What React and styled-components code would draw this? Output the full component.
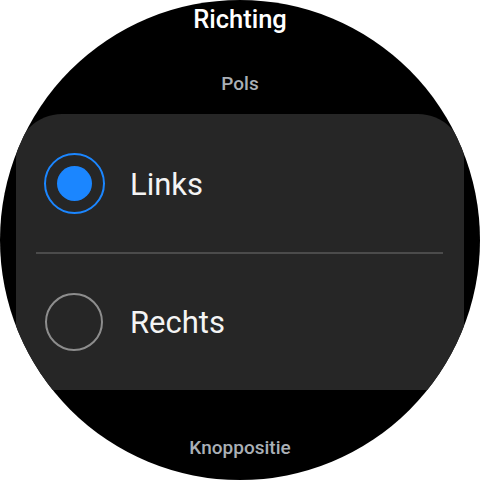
import React from "react";
import styled, { createGlobalStyle } from "styled-components";

const Global = createGlobalStyle`
  html, body { margin: 0; padding: 0; background: #ffffff; }
  body { font-family: Roboto, "Noto Sans", "Liberation Sans", sans-serif; }
  #root { width: 480px; height: 480px; }
`;

const Watch = styled.div`
  width: 480px;
  height: 480px;
  border-radius: 50%;
  overflow: hidden;
  background: #000;
  display: flex;
  flex-direction: column;
  align-items: center;
`;

const Title = styled.div`
  margin-top: 7px;
  font-size: 25.5px;
  line-height: 25px;
  font-weight: 500;
  color: #ffffff;
`;

const Caption = styled.div`
  margin-top: ${(p) => p.$top}px;
  font-size: 19px;
  line-height: 19px;
  font-weight: 500;
  color: #aab0b6;
`;

const Card = styled.div`
  margin-top: 21px;
  width: 448px;
  background: #262626;
  border-radius: 46px 46px 0 0;
  display: flex;
  flex-direction: column;
`;

const Row = styled.div`
  height: ${(p) => p.$h}px;
  display: flex;
  align-items: center;
  padding-left: 27px;
  gap: 25px;
`;

const Divider = styled.div`
  height: 1.5px;
  margin: 0 21px 0 20px;
  background: #4b4b4b;
`;

const RadioSlot = styled.div`
  width: 62px;
  height: 62px;
  display: flex;
  align-items: center;
  justify-content: center;
  flex-shrink: 0;
`;

const Radio = styled.div`
  box-sizing: border-box;
  width: ${(p) => (p.$checked ? 61 : 58)}px;
  height: ${(p) => (p.$checked ? 61 : 58)}px;
  border-radius: 50%;
  border: ${(p) => (p.$checked ? "2.2px solid #1b86ff" : "2.6px solid #8d8d8d")};
  display: flex;
  align-items: center;
  justify-content: center;
`;

const Dot = styled.div`
  width: 35px;
  height: 35px;
  border-radius: 50%;
  background: #1b86ff;
`;

const Label = styled.div`
  font-size: 31px;
  line-height: 31px;
  color: #f4f4f4;
  margin-top: 2px;
`;

const options = [
  { label: "Links", checked: true, h: 138 },
  { label: "Rechts", checked: false, h: 136 },
];

export default function App() {
  return (
    <>
      <Global />
      <Watch>
        <Title>Richting</Title>
        <Caption $top={42}>Pols</Caption>
        <Card>
          {options.map((o, i) => (
            <React.Fragment key={o.label}>
              {i > 0 && <Divider />}
              <Row $h={o.h}>
                <RadioSlot>
                  <Radio $checked={o.checked}>{o.checked && <Dot />}</Radio>
                </RadioSlot>
                <Label>{o.label}</Label>
              </Row>
            </React.Fragment>
          ))}
        </Card>
        <Caption $top={48}>Knoppositie</Caption>
      </Watch>
    </>
  );
}
